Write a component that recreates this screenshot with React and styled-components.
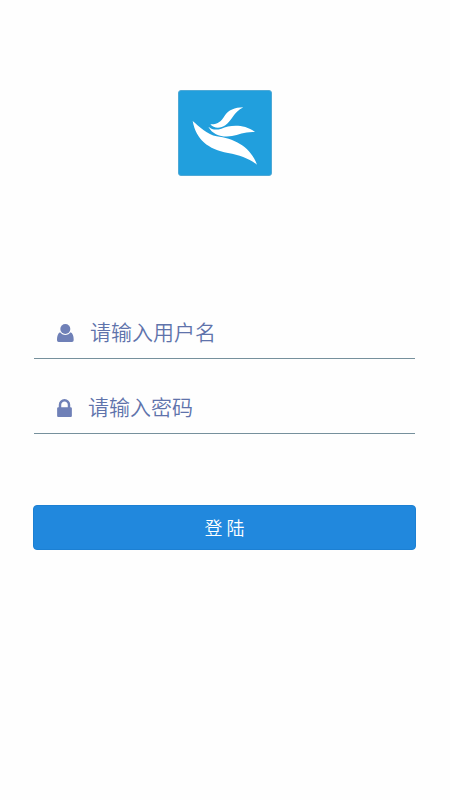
import React, { useState } from 'react'
import styled, { createGlobalStyle } from 'styled-components'

const GlobalStyle = createGlobalStyle`
  * {
    box-sizing: border-box;
  }
  body {
    margin: 0;
    background: #fefefe;
    font-family: 'Noto Sans CJK SC', sans-serif;
  }
`
const Page = styled.main`
  display: flex;
  flex-direction: column;
  align-items: center;
  padding: 90px 34px 40px 33px;
`
const Logo = styled.svg`
  display: block;
  width: 94px;
  height: 86px;
  border: 1px solid #4fa9d6;
  border-radius: 3px;
  background: #219fdd;
`
const LoginForm = styled.form`
  display: flex;
  flex-direction: column;
  width: 100%;
  margin-top: 108px;
`
const Field = styled.div`
  display: flex;
  align-items: center;
  gap: 16px;
  height: 75px;
  margin: 0 1px;
  padding: 24px 0 0 23px;
  border-bottom: 1px solid #76909c;
`
const FieldIcon = styled.svg`
  flex: none;
  width: ${(props) => props.$width}px;
  height: 18px;
  fill: #6f80b7;
`
const FieldInput = styled.input`
  flex: 1;
  min-width: 0;
  height: 40px;
  padding: 0 0 4px;
  border: none;
  outline: none;
  background: transparent;
  color: #5f73ab;
  font-family: inherit;
  font-size: 21px;
  font-weight: 350;
  &::placeholder {
    color: #5f73ab;
    opacity: 1;
  }
`
const LoginButton = styled.button`
  height: 45px;
  margin-top: 71px;
  padding: 0 0 2px;
  border: 1px solid #1c80d3;
  border-radius: 4px;
  background: #2188dd;
  color: #fff;
  font-family: inherit;
  font-size: 18px;
  font-weight: 350;
  cursor: pointer;
`

function UserIcon() {
  return (
    <FieldIcon $width={17} viewBox="0 0 51 54" aria-hidden="true">
      <circle cx="25" cy="15" r="15" />
      <path d="M9 25C13 30 18 33 25 33S37 30 41 25C47 28 50 36 50 46V49Q50 54 45 54H5Q0 54 0 49V46C0 36 3 28 9 25Z" />
    </FieldIcon>
  )
}

function LockIcon() {
  return (
    <FieldIcon $width={15} viewBox="320 128 1152 1408" aria-hidden="true">
      <path d="M640 768h512v-192q0-106-75-181t-181-75-181 75-75 181v192zm832 96v576q0 40-28 68t-68 28h-960q-40 0-68-28t-28-68v-576q0-40 28-68t68-28h32v-192q0-184 132-316t316-132 316 132 132 316v192h32q40 0 68 28t28 68z" />
    </FieldIcon>
  )
}

export default function App() {
  const [username, setUsername] = useState('')
  const [password, setPassword] = useState('')

  return (
    <>
      <GlobalStyle />
      <Page>
        <Logo viewBox="-27 -33 276 252" aria-hidden="true">
          <g fill="#fff">
            <path d="M166 16C140 16 121 25 110 41C99 58 90 68 67 67C77 80 98 80 112 70C133 55 136 31 166 16Z" />
            <path d="M61 74C72 83 84 85 100 80C125 70 165 64 201 90C172 88 153 98 132 102C104 107 74 99 61 74Z" />
            <path d="M14 57C35 75 58 98 86 103C137 110 186 132 207 188C182 169 155 159 120 153C60 142 24 112 14 57Z" />
          </g>
        </Logo>
        <LoginForm onSubmit={(e) => e.preventDefault()}>
          <Field>
            <UserIcon />
            <FieldInput
              type="text"
              name="username"
              aria-label="请输入用户名"
              placeholder="请输入用户名"
              value={username}
              onChange={(e) => setUsername(e.target.value)}
            />
          </Field>
          <Field>
            <LockIcon />
            <FieldInput
              type="password"
              name="password"
              aria-label="请输入密码"
              placeholder="请输入密码"
              value={password}
              onChange={(e) => setPassword(e.target.value)}
            />
          </Field>
          <LoginButton type="submit">登 陆</LoginButton>
        </LoginForm>
      </Page>
    </>
  )
}
